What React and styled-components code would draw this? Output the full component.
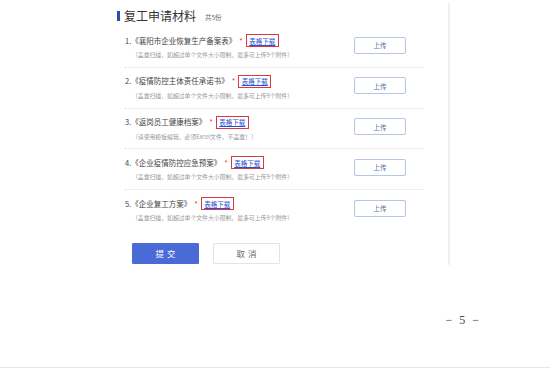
import React from "react";
import styled, { createGlobalStyle } from "styled-components";

const GlobalStyle = createGlobalStyle`
  html, body {
    margin: 0;
    padding: 0;
    background: #ffffff;
  }
  * {
    box-sizing: border-box;
  }
`;

const Page = styled.div`
  display: flex;
  flex-direction: column;
  width: 550px;
  height: 368px;
  background: #ffffff;
  border-bottom: 1px solid #e6e6e6;
  font-family: "Noto Sans CJK SC", "Noto Sans", sans-serif;
`;

const Main = styled.div`
  display: flex;
  align-items: flex-start;
  padding-left: 117px;
`;

const Section = styled.div`
  width: 308px;
  padding-top: 9px;
`;

const Divider = styled.div`
  width: 2px;
  height: 262px;
  margin-top: 3px;
  margin-left: 23px;
  background: #efefef;
`;

const Header = styled.div`
  display: flex;
  align-items: center;
  height: 14px;
  gap: 4px;
`;

const HeaderBar = styled.span`
  width: 3px;
  height: 10px;
  background: #2d4fa8;
`;

const HeaderTitle = styled.span`
  color: #333333;
  font-size: 12px;
  line-height: 14px;
`;

const HeaderCount = styled.span`
  color: #666666;
  font-size: 6.5px;
  line-height: 14px;
  margin-left: 5px;
  margin-top: 2px;
`;

const List = styled.div`
  display: flex;
  flex-direction: column;
  margin-top: 4px;
  margin-left: 8px;
  width: 298px;
`;

const Row = styled.div`
  display: flex;
  justify-content: space-between;
  align-items: flex-start;
  height: 40.75px;
  padding-top: 7.5px;
  border-bottom: ${(p) => (p.$last ? "none" : "1px dotted #dedede")};
`;

const RowText = styled.div`
  display: flex;
  flex-direction: column;
  gap: 4.5px;
`;

const RowTitle = styled.div`
  display: flex;
  align-items: center;
  height: 12px;
  color: #444444;
  font-size: 7.5px;
  line-height: 12px;
  white-space: nowrap;
`;

const Star = styled.span`
  color: #e0343c;
  margin-left: 3px;
  margin-right: 3px;
`;

const LinkBox = styled.span`
  display: inline-flex;
  align-items: center;
  height: 13px;
  padding: 0 2.5px;
  border: 1.5px solid #d93a3f;
`;

const DownloadLink = styled.a`
  color: #2b4fd1;
  font-size: 6.5px;
  text-decoration: underline;
`;

const RowNote = styled.div`
  height: 8px;
  padding-left: 7px;
  color: #9a9a9a;
  font-size: 5.85px;
  line-height: 8px;
  white-space: nowrap;
`;

const UploadButton = styled.div`
  display: flex;
  align-items: center;
  justify-content: center;
  width: 52px;
  height: 17px;
  margin-top: 2px;
  margin-right: 17px;
  border: 1px solid #b6c6e6;
  border-radius: 2px;
  color: #5b6f9e;
  font-size: 6.5px;
`;

const Actions = styled.div`
  display: flex;
  gap: 14px;
  margin-top: 12px;
  margin-left: 15px;
`;

const ActionButton = styled.div`
  display: flex;
  align-items: center;
  justify-content: center;
  width: 67px;
  height: 21px;
  border-radius: 1px;
  font-size: 8.5px;
  letter-spacing: 3px;
  padding-left: 3px;
  background: ${(p) => (p.$primary ? "#4a6bd5" : "#ffffff")};
  color: ${(p) => (p.$primary ? "#ffffff" : "#666666")};
  border: 1px solid ${(p) => (p.$primary ? "#4a6bd5" : "#e4e4e4")};
`;

const Footer = styled.div`
  display: flex;
  justify-content: flex-end;
  padding-right: 71px;
  margin-top: 48px;
`;

const PageNumber = styled.span`
  color: #444444;
  font-family: "Liberation Serif", "DejaVu Serif", serif;
  font-size: 12px;
  line-height: 14px;
  word-spacing: 4px;
`;

const items = [
  { title: "1.《襄阳市企业恢复生产备案表》", note: "（盖章扫描，如超过单个文件大小限制，最多可上传9个附件）" },
  { title: "2.《疫情防控主体责任承诺书》", note: "（盖章扫描，如超过单个文件大小限制，最多可上传9个附件）" },
  { title: "3.《返岗员工健康档案》", note: "（请使用模板编辑，必须Excel文件，不盖章！）" },
  { title: "4.《企业疫情防控应急预案》", note: "（盖章扫描，如超过单个文件大小限制，最多可上传9个附件）" },
  { title: "5.《企业复工方案》", note: "（盖章扫描，如超过单个文件大小限制，最多可上传9个附件）" },
];

const App = () => {
  return (
    <>
      <GlobalStyle />
      <Page>
        <Main>
          <Section>
            <Header>
              <HeaderBar />
              <HeaderTitle>复工申请材料</HeaderTitle>
              <HeaderCount>共5份</HeaderCount>
            </Header>

            <List>
              {items.map((item, i) => (
                <Row key={item.title} $last={i === items.length - 1}>
                  <RowText>
                    <RowTitle>
                      {item.title}
                      <Star>*</Star>
                      <LinkBox>
                        <DownloadLink>表格下载</DownloadLink>
                      </LinkBox>
                    </RowTitle>
                    <RowNote>{item.note}</RowNote>
                  </RowText>
                  <UploadButton>上传</UploadButton>
                </Row>
              ))}
            </List>

            <Actions>
              <ActionButton $primary>提交</ActionButton>
              <ActionButton>取消</ActionButton>
            </Actions>
          </Section>
          <Divider />
        </Main>

        <Footer>
          <PageNumber>− 5 −</PageNumber>
        </Footer>
      </Page>
    </>
  );
};

export default App;
